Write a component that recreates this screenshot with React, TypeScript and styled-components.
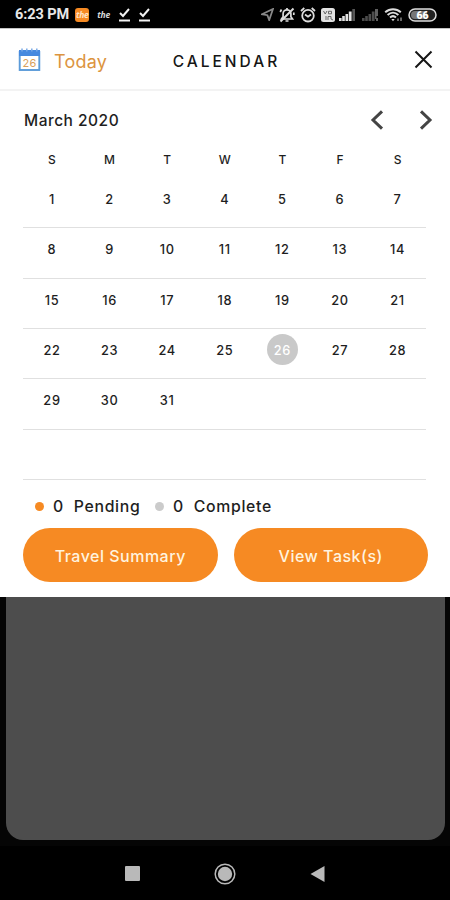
import React from "react";
import styled, { createGlobalStyle } from "styled-components";

const ORANGE = "#f68a23";

const GlobalStyle = createGlobalStyle`
  * { box-sizing: border-box; }
  body { margin: 0; background: #000; font-family: Inter, "Open Sans", sans-serif; }
  button { border: 0; padding: 0; margin: 0; background: none; font-family: inherit; }
`;

const Screen = styled.div`
  width: 450px;
  height: 900px;
  display: flex;
  flex-direction: column;
  overflow: hidden;
  background: #000;
`;

const StatusBar = styled.div`
  height: 28px;
  flex: none;
  display: flex;
  align-items: center;
  justify-content: space-between;
  padding: 1px 13px 0 15px;
  color: #e8e8e8;
`;

const StatusGroup = styled.div<{ $gap: number }>`
  display: flex;
  align-items: center;
  gap: ${(p) => p.$gap}px;
  svg { display: block; }
`;

const Clock = styled.span`
  width: 55px;
  margin-right: -2px;
  font: 700 14.5px/18px Roboto, sans-serif;
  letter-spacing: -0.1px;
  white-space: nowrap;
`;

const AppBadge = styled.span<{ $filled?: boolean }>`
  width: 14px;
  height: 14px;
  border-radius: 3px;
  display: flex;
  align-items: center;
  justify-content: center;
  background: ${(p) => (p.$filled ? ORANGE : "transparent")};
  font: italic 700 8.5px/10px "Open Sans", sans-serif;
  letter-spacing: -0.3px;
  color: ${(p) => (p.$filled ? "#ffe3c4" : "#d8d8d8")};
`;

const Sheet = styled.main`
  height: 568.5px;
  flex: none;
  background: #fff;
`;

const Header = styled.header`
  height: 63px;
  border-top: 1px solid #c4c4c4;
  border-bottom: 2px solid #f3f3f3;
  display: grid;
  grid-template-columns: 150px 1fr 150px;
  align-items: center;
`;

const TodayButton = styled.button`
  display: flex;
  align-items: center;
  gap: 13px;
  padding: 5px 0 0 18px;
  color: #dc943e;
  font-size: 18px;
  line-height: 24px;
  letter-spacing: 0.2px;
  svg { display: block; margin-top: -3px; }
`;

const Title = styled.h1`
  margin: 4px 0 0;
  padding-left: 3px;
  text-align: center;
  white-space: nowrap;
  font-size: 15.5px;
  font-weight: 500;
  letter-spacing: 3px;
  color: #161616;
`;

const CloseButton = styled.button`
  justify-self: end;
  margin: 1px 17px 0 0;
  svg { display: block; }
`;

const MonthRow = styled.div`
  height: 57px;
  display: flex;
  align-items: center;
  justify-content: space-between;
  padding: 1px 17px 0 24px;
`;

const MonthName = styled.h2`
  margin: 1px 0 0;
  font-size: 15.5px;
  font-weight: 500;
  letter-spacing: 0.5px;
  color: #1e1e1e;
`;

const Arrows = styled.div`
  display: flex;
  gap: 35px;
  svg { display: block; }
`;

const Week = styled.div`
  width: 403.2px;
  margin-left: 23.2px;
  height: 50.4px;
  padding-top: 5px;
  display: grid;
  grid-template-columns: repeat(7, 1fr);
  justify-items: center;
  border-bottom: 1.5px solid #e0e0e0;
`;

const Weekdays = styled(Week)`
  height: 29.8px;
  padding-top: 2px;
  border: 0;
`;

const Weekday = styled.span`
  font-size: 12px;
  line-height: 20px;
  font-weight: 500;
  color: #1e1e1e;
`;

const Day = styled.span<{ $selected?: boolean }>`
  width: 31px;
  height: 31px;
  border-radius: 50%;
  display: flex;
  align-items: center;
  justify-content: center;
  padding-top: 2px;
  background: ${(p) => (p.$selected ? "#c9c9c9" : "transparent")};
  color: ${(p) => (p.$selected ? "#fff" : "#1e1e1e")};
  font-size: 12.8px;
  font-weight: 500;
  letter-spacing: 0.7px;
`;

const Legend = styled.div`
  height: 47.5px;
  display: flex;
  align-items: center;
  padding: 5px 0 0 35px;
`;

const LegendItem = styled.span<{ $dot: string; $width: number }>`
  width: ${(p) => p.$width}px;
  display: flex;
  align-items: center;
  white-space: pre;
  font-size: 15.8px;
  font-weight: 500;
  letter-spacing: 0.7px;
  color: #1e1e1e;
  &::before {
    content: "";
    width: 9px;
    height: 9px;
    margin-right: 9px;
    border-radius: 50%;
    background: ${(p) => p.$dot};
  }
`;

const Actions = styled.div`
  display: grid;
  grid-template-columns: 1fr 1fr;
  gap: 16px;
  padding: 0 22px 0 23px;
`;

const ActionButton = styled.button`
  height: 54.5px;
  border-radius: 28px;
  padding-top: 3px;
  background: ${ORANGE};
  color: #fff3df;
  font-size: 16px;
  font-weight: 500;
  letter-spacing: 0.5px;
`;

const Backdrop = styled.div`
  flex: 1;
  display: flex;
  padding: 0 5px 6px 6px;
  background: #050505;
`;

const DimPanel = styled.div`
  flex: 1;
  border-radius: 0 0 17px 17px;
  background: #4d4d4d;
`;

const NavBar = styled.nav`
  height: 54px;
  flex: none;
  display: flex;
  justify-content: center;
  align-items: center;
  gap: 74px;
  padding-top: 1px;
  background: #000;
  svg { display: block; }
`;

const weeks = [
  [1, 2, 3, 4, 5, 6, 7],
  [8, 9, 10, 11, 12, 13, 14],
  [15, 16, 17, 18, 19, 20, 21],
  [22, 23, 24, 25, 26, 27, 28],
  [29, 30, 31],
  [],
];

const CheckIcon = () => (
  <svg width="13" height="14" viewBox="0 0 13 14" fill="none" stroke="#f2f2f2" strokeWidth="2">
    <path d="M2 5l3 3 6-7M1 12.5h11" />
  </svg>
);

const SignalIcon = ({ dim = false }: { dim?: boolean }) => (
  <svg width="17" height="13" viewBox="0 0 17 13" fill={dim ? "#4c4c4c" : "#e4e4e4"}>
    <path d="M0 10h2.6v3H0zM3.2 8h2.6v5H3.2zM6.5 6h2.6v7H6.5zM9.8 3.5h2.8V13H9.8z" />
    {dim ? (
      <path d="M13 1h3v7h-1.5v2H16v3h-2v-2h-1z" fill="#606060" />
    ) : (
      <path d="M13.3 1H16v12h-2.7z" fill="#555" />
    )}
  </svg>
);

const CalendarIcon = () => (
  <svg width="23" height="24" viewBox="0 0 23 24">
    <rect x="1.7" y="4" width="19.6" height="18" fill="#fff" stroke="#5b9bd9" strokeWidth="1.9" />
    <path d="M1 2h21v6H1z" fill="#4689df" />
    <path d="M4 .5v3M8.8.5v3M13.8.5v3M18.8.5v3" stroke="#79a9e6" strokeWidth="1.5" />
    <text x="11.5" y="18.7" textAnchor="middle" fontFamily="Inter, sans-serif" fontSize="11" fill="#d9a05c">26</text>
  </svg>
);

const Chevron = ({ d }: { d: string }) => (
  <svg width="14" height="20" viewBox="0 0 14 20" fill="none" stroke="#444" strokeWidth="3">
    <path d={d} />
  </svg>
);

export default function App() {
  return (
    <Screen>
      <GlobalStyle />
      <StatusBar>
        <StatusGroup $gap={7.3}>
          <Clock>6:23 PM</Clock>
          <AppBadge $filled>the</AppBadge>
          <AppBadge>the</AppBadge>
          <CheckIcon />
          <CheckIcon />
        </StatusGroup>
        <StatusGroup $gap={5.2}>
          <svg width="13" height="13" viewBox="0 0 13 13" fill="none" stroke="#888" strokeWidth="1.8">
            <path d="M1 6.2L12 1 8.2 12 6.4 7.2z" />
          </svg>
          <svg width="16" height="16" viewBox="0 0 16 16" fill="none" stroke="#ddd" strokeWidth="1.7">
            <path d="M2.5 12h11l-1.6-2.3V6.7a3.9 3.9 0 0 0-7.8 0v3zM8 1v2M6.5 14h3M1.2 5l1.3-2.5M14.8 8V5.5" />
            <path d="M1.5 14.5L14.5 1.5" strokeWidth="2" />
          </svg>
          <svg width="16" height="16" viewBox="0 0 16 16" fill="none" stroke="#ddd" strokeWidth="1.8">
            <circle cx="8" cy="8.7" r="5.8" />
            <path d="M1 4l3.3-3M15 4l-3.3-3M5 7.5L8 9.7l3-2.2" />
          </svg>
          <StatusGroup $gap={4}>
            <svg width="14" height="14" viewBox="0 0 14 14">
              <rect width="14" height="14" rx="2.5" fill="#e2e2e2" />
              <path d="M2.5 3l1.7 3L6 3M7.5 3.3h3v2.5h-3zM5 8v4M7 12V8.5h3V11l2 1" fill="none" stroke="#666" strokeWidth="1" />
            </svg>
            <SignalIcon />
          </StatusGroup>
          <SignalIcon dim />
          <svg width="19" height="16" viewBox="0 0 19 16" fill="none" stroke="#ddd" strokeWidth="2">
            <path d="M1.2 5.3c4.7-4.1 11-4.1 15.6 0M3.6 8c3.3-3 7.5-3 10.8 0M6 10.5c2-1.8 4-1.8 6 0" />
            <path d="M7.3 12h3.4L9 14.2z" fill="#ddd" stroke="none" />
            <path d="M14 11.5V14M17 10.5V14" stroke="#888" strokeWidth="1.5" />
          </svg>
          <svg width="29" height="14" viewBox="0 0 29 14">
            <rect x="1" y="1" width="27" height="12" rx="6" fill="#222" stroke="#ddd" strokeWidth="1.5" />
            <path d="M7 3h12v8H7a4 4 0 0 1 0-8z" fill="#777" />
            <text x="14.5" y="10.8" textAnchor="middle" fontFamily="Roboto, sans-serif" fontWeight="900" fontSize="10.5" fill="#fff">66</text>
          </svg>
        </StatusGroup>
      </StatusBar>

      <Sheet>
        <Header>
          <TodayButton>
            <CalendarIcon />
            Today
          </TodayButton>
          <Title>CALENDAR</Title>
          <CloseButton aria-label="Close">
            <svg width="19" height="19" viewBox="0 0 19 19" fill="none" stroke="#161616" strokeWidth="2">
              <path d="M1.5 1.5l16 16M17.5 1.5l-16 16" />
            </svg>
          </CloseButton>
        </Header>
        <MonthRow>
          <MonthName>March 2020</MonthName>
          <Arrows>
            <Chevron d="M12 1.3L3 10l9 8.7" />
            <Chevron d="M2 1.3L11 10l-9 8.7" />
          </Arrows>
        </MonthRow>
        <Weekdays>
          {["S", "M", "T", "W", "T", "F", "S"].map((label, i) => (
            <Weekday key={i}>{label}</Weekday>
          ))}
        </Weekdays>
        {weeks.map((days, i) => (
          <Week key={i}>
            {days.map((day) => (
              <Day key={day} $selected={day === 26}>{day}</Day>
            ))}
          </Week>
        ))}
        <Legend>
          <LegendItem $dot={ORANGE} $width={120}>{"0  Pending"}</LegendItem>
          <LegendItem $dot="#cbcbcb" $width={130}>{"0  Complete"}</LegendItem>
        </Legend>
        <Actions>
          <ActionButton>Travel Summary</ActionButton>
          <ActionButton>View Task(s)</ActionButton>
        </Actions>
      </Sheet>

      <Backdrop>
        <DimPanel />
      </Backdrop>

      <NavBar>
        <svg width="15" height="15" viewBox="0 0 15 15"><rect width="15" height="15" rx="1" fill="#b9b9b9" /></svg>
        <svg width="22" height="22" viewBox="0 0 22 22">
          <circle cx="11" cy="11" r="9.8" fill="none" stroke="#b9b9b9" strokeWidth="1.5" />
          <circle cx="11" cy="11" r="7.2" fill="#b9b9b9" />
        </svg>
        <svg width="15" height="16" viewBox="0 0 15 16"><path d="M14.5 0v16L.5 8z" fill="#b9b9b9" /></svg>
      </NavBar>
    </Screen>
  );
}
